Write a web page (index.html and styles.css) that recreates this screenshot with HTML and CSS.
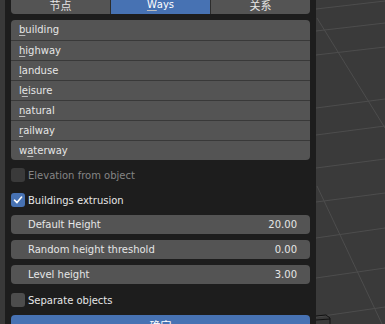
FILE: index.html
```html
<!DOCTYPE html>
<html lang="en">
<head>
    <meta charset="UTF-8">
    <title>Import OSM</title>
    <link rel="stylesheet" href="styles.css">
</head>
<body>
    <div class="screen">
        <div class="gutter"></div>
        <main class="panel">
            <div class="tabs">
                <div class="tab cjk">节点</div>
                <div class="tab active"><u>W</u>ays</div>
                <div class="tab cjk">关系</div>
            </div>

            <ul class="tag-list">
                <li><u>b</u>uilding</li>
                <li><u>h</u>ighway</li>
                <li><u>l</u>anduse</li>
                <li>l<u>e</u>isure</li>
                <li><u>n</u>atural</li>
                <li><u>r</u>ailway</li>
                <li>w<u>a</u>terway</li>
            </ul>

            <div class="options">
                <label class="check disabled"><span class="box"></span>Elevation from object</label>
                <label class="check"><span class="box checked">
                    <svg width="10" height="10" viewBox="0 0 10 10"><path d="M1.5 5.2 L4 7.6 L8.6 2" fill="none" stroke="#fff" stroke-width="1.6" stroke-linecap="round" stroke-linejoin="round"/></svg>
                </span>Buildings extrusion</label>
                <div class="field"><span>Default Height</span><span>20.00</span></div>
                <div class="field"><span>Random height threshold</span><span>0.00</span></div>
                <div class="field"><span>Level height</span><span>3.00</span></div>
                <label class="check"><span class="box"></span>Separate objects</label>
                <button class="confirm cjk">确定</button>
            </div>
        </main>
        <div class="viewport">
            <svg width="69" height="324" viewBox="0 0 69 324">
                <g stroke="#4d4d4d" stroke-width="1" fill="none">
                    <line x1="0" y1="9" x2="69" y2="1"/>
                    <line x1="0" y1="31" x2="69" y2="23"/>
                    <line x1="0" y1="55" x2="69" y2="47"/>
                    <line x1="0" y1="108" x2="69" y2="99"/>
                    <line x1="0" y1="135" x2="69" y2="126"/>
                    <line x1="0" y1="168" x2="69" y2="159"/>
                    <line x1="0" y1="202" x2="69" y2="193"/>
                    <line x1="0" y1="238" x2="69" y2="228"/>
                    <line x1="0" y1="278" x2="69" y2="268"/>
                    <line x1="0" y1="317" x2="69" y2="307"/>
                    <line x1="1" y1="18" x2="69" y2="128"/>
                    <line x1="1" y1="186" x2="66" y2="324"/>
                </g>
                <path d="M0 316 L10 315 L14 318 L14 324 M0 320 L14 319" stroke="#111" stroke-width="1" fill="none"/>
            </svg>
        </div>
    </div>
</body>
</html>
```

FILE: styles.css
```css
* {
    box-sizing: border-box;
}

body {
    margin: 0;
    background: #3d3d3d;
    font-family: "DejaVu Sans", sans-serif;
    font-size: 10px;
    color: #e6e6e6;
    overflow: hidden;
}

.screen {
    display: flex;
    width: 385px;
    height: 324px;
    overflow: hidden;
}

.gutter {
    width: 5px;
    background: #393939;
}

.panel {
    width: 311px;
    background: #1d1d1d;
    padding: 0 6px;
    display: flex;
    flex-direction: column;
}

.panel > * {
    flex-shrink: 0;
}

.viewport {
    flex: 1;
    background: #3a3a3a;
}

.viewport svg {
    display: block;
}

.cjk {
    font-family: "DejaVu Sans", "Noto Sans CJK SC", sans-serif;
    font-size: 11px;
}

u {
    text-decoration: underline;
    text-underline-offset: 2px;
    text-decoration-thickness: 1px;
    text-decoration-color: #bdbdbd;
}

.tabs {
    display: flex;
    height: 20px;
    margin-top: -6px;
    border-radius: 0 0 4px 4px;
    overflow: hidden;
    gap: 1px;
    background: #2c2c2c;
}

.tab {
    flex: 1;
    background: #545454;
    display: flex;
    align-items: center;
    justify-content: center;
    padding-top: 1px;
}

.tab.active {
    background: #4772b3;
    color: #fff;
}

.tag-list {
    list-style: none;
    margin: 6px 0 0;
    padding: 0;
    background: #545454;
    border-radius: 4px;
    overflow: hidden;
}

.tag-list li {
    height: 20px;
    line-height: 20px;
    padding-left: 8px;
    border-top: 1px solid #393939;
}

.tag-list li:first-child {
    border-top: none;
}

.options {
    display: flex;
    flex-direction: column;
    gap: 5px;
    margin-top: 5px;
}

.options > * {
    flex-shrink: 0;
}

.check {
    display: flex;
    align-items: center;
    height: 20px;
    gap: 3px;
}

.check.disabled {
    color: #858585;
}

.box {
    width: 14px;
    height: 14px;
    border-radius: 3px;
    background: #4d4d4d;
    display: flex;
    align-items: center;
    justify-content: center;
}

.check.disabled .box {
    background: #3a3a3a;
}

.box.checked {
    background: #4772b3;
}

.field {
    display: flex;
    justify-content: space-between;
    align-items: center;
    height: 19px;
    padding: 0 13px 0 17px;
    background: #545454;
    border-radius: 4px;
    margin-bottom: 1px;
}

.confirm {
    height: 20px;
    border: none;
    border-radius: 4px;
    background: #4772b3;
    color: #fff;
    padding: 0;
}
```
